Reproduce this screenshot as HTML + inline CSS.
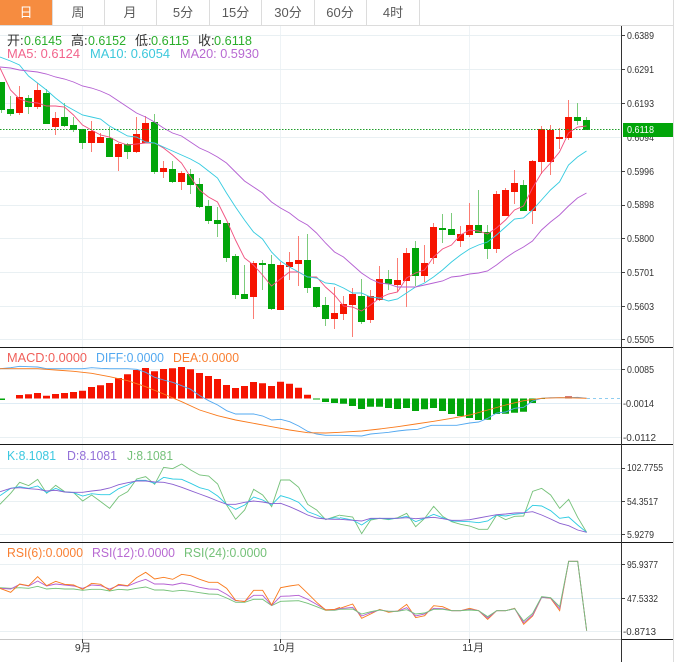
<!DOCTYPE html>
<html><head><meta charset="utf-8"><style>
html,body{margin:0;padding:0;background:#fff}
svg{display:block;font-family:"Liberation Sans","Noto Sans CJK SC",sans-serif}
.a{font-size:10.5px;fill:#333}
.t{font-size:13px;fill:#5a5a5a;text-anchor:middle}
.h{font-size:13px}
.l{fill:none;stroke-width:.9;vector-effect:non-scaling-stroke}
</style></head><body>
<svg width="678" height="662" viewBox="0 0 678 662" xmlns="http://www.w3.org/2000/svg">
<rect width="678" height="662" fill="#fff"/>
<!-- tabs -->
<rect x="0" y="0" width="52" height="25" fill="#f68c40"/>
<path d="M52.5 0V25M104.5 0V25M156.5 0V25M209.5 0V25M261.5 0V25M314.5 0V25M366.5 0V25M419.5 0V25" stroke="#dcdcdc"/>
<path d="M0 25.5H674" stroke="#dcdcdc"/>
<text class="t" x="26" y="17" style="fill:#fff">日</text>
<text class="t" x="78" y="17">周</text>
<text class="t" x="130" y="17">月</text>
<text class="t" x="183" y="17">5分</text>
<text class="t" x="235.500" y="17">15分</text>
<text class="t" x="288" y="17">30分</text>
<text class="t" x="340" y="17">60分</text>
<text class="t" x="393" y="17">4时</text>
<!-- grid -->
<path d="M82.500 26V639M280.500 26V639M469.500 26V639" stroke="#eef3f6"/>
<path d="M0 35.500H622M0 69.500H622M0 103.500H622M0 137.500H622M0 171.500H622M0 205.500H622M0 238.500H622M0 272.500H622M0 306.500H622M0 339.500H622M0 468.500H622M0 501.500H622M0 534.500H622M0 369.500H622M0 437.500H622M0 564.500H622M0 631.500H622" stroke="#e9f0f3"/>
<path d="M0 403.500H622M0 598.500H622" stroke="#dfecf5"/>
<!-- wicks -->
<path fill="none" stroke="#7ccb7c" d="M1.500 82V113M10.500 96V116M28.500 95V114M46.500 89V124M64.500 103V127M73.500 117V132M82.500 129V149M109.500 127V157M127.500 143V159M154.500 114V174M172.500 161V183M190.500 169V194M199.500 178V208M208.500 200V224M217.500 207V237M226.500 223V262M235.500 254V299M244.500 265V299M262.500 260V290M271.500 255V310M307.500 234V293M316.500 287V308M325.500 297V326M361.500 279V324M388.500 270V290M415.500 241V286M442.500 214V243M451.500 213V235M478.500 190V233M487.500 225V259M523.500 180V211M577.500 103V125M586.500 117V130"/>
<path fill="none" stroke="#fb7d74" d="M19.500 86V115M37.500 83V109M55.500 112V135M91.500 121V152M100.500 133V143M118.500 143V171M136.500 117V153M145.500 116V143M163.500 161V178M181.500 171V190M253.500 261V319M280.500 262V310M289.500 252V280M298.500 236V286M334.500 287V329M343.500 296V320M352.500 288V337M370.500 290V323M379.500 266V301M397.500 258V292M406.500 248V307M424.500 245V282M433.500 223V264M460.500 226V247M469.500 203V237M496.500 191V253M505.500 188V216M514.500 170V204M532.500 160V224M541.500 126V174M550.500 125V175M559.500 128V149M568.500 100V140"/>
<!-- bodies -->
<path fill="none" stroke="#02a50a" stroke-width="7" d="M1.500 82V110M10.500 109V114M28.500 98V107M46.500 93V124M64.500 117V126M73.500 125V130M82.500 129V143M109.500 138V157M127.500 144V152M154.500 122V172M172.500 169V182M190.500 174V185M199.500 184V207M208.500 206V221M217.500 220V224M226.500 223V258M235.500 256V295M244.500 294V299M262.500 263V265M271.500 264V309M307.500 260V288M316.500 287V307M325.500 305V319M361.500 296V322M388.500 279V284M415.500 248V276M442.500 228V230M451.500 229V235M478.500 225V233M487.500 232V249M523.500 185V211M577.500 117V121M586.500 120V130"/>
<path fill="none" stroke="#f61400" stroke-width="7" d="M19.500 97V113M37.500 90V107M55.500 118V127M91.500 131V143M100.500 137V143M118.500 144V157M136.500 134V152M145.500 123V143M163.500 168V172M181.500 173V182M253.500 263V297M280.500 265V310M289.500 262V267M298.500 260V264M334.500 313V319M343.500 304V314M352.500 294V305M370.500 296V320M379.500 279V300M397.500 280V285M406.500 253V281M424.500 263V276M433.500 227V258M460.500 234V241M469.500 225V235M496.500 194V249M505.500 190V216M514.500 183V192M532.500 161V211M541.500 129V162M550.500 130V162M559.500 137V139M568.500 117V138"/>
<!-- MA lines -->
<polyline class="l" stroke="#f0507f" points="0,68 10.500,90 19.500,99 28.500,102 37.500,103 46.500,106 55.500,106 64.500,107 73.500,115 82.500,125 91.500,130 100.500,135 109.500,137 118.500,142 127.500,145 136.500,144 145.500,143 154.500,143 163.500,148 172.500,155 181.500,163 190.500,177 199.500,190 208.500,197 217.500,202 226.500,220 235.500,240 244.500,258 253.500,265 262.500,275 271.500,286 280.500,279 289.500,272 298.500,272 307.500,277 316.500,277 325.500,287 334.500,295 343.500,306 352.500,307 361.500,311 370.500,305 379.500,298 388.500,294 397.500,292 406.500,278 415.500,273 424.500,270 433.500,257 442.500,249 451.500,245 460.500,235 469.500,230 478.500,231 487.500,234 496.500,228 505.500,220 514.500,210 523.500,206 532.500,188 541.500,173 550.500,163 559.500,152 568.500,133 577.500,127 586.500,126"/>
<polyline class="l" stroke="#35cbe0" points="0,57 10.500,61 19.500,65 28.500,76 37.500,83 46.500,90 55.500,98 64.500,105 73.500,110 82.500,115 91.500,117 100.500,119 109.500,126 118.500,131 127.500,136 136.500,137 145.500,142 154.500,143 163.500,147 172.500,151 181.500,155 190.500,159 199.500,164 208.500,171 217.500,178 226.500,193 235.500,207 244.500,220 253.500,232 262.500,239 271.500,252 280.500,261 289.500,267 298.500,272 307.500,277 316.500,278 325.500,283 334.500,284 343.500,288 352.500,293 361.500,293 370.500,297 379.500,298 388.500,301 397.500,299 406.500,293 415.500,287 424.500,283 433.500,277 442.500,270 451.500,262 460.500,255 469.500,249 478.500,245 487.500,242 496.500,235 505.500,227 514.500,219 523.500,218 532.500,210 541.500,200 550.500,190 559.500,182 568.500,165 577.500,157 586.500,151"/>
<polyline class="l" stroke="#b45fd2" points="0,67 10.500,68 19.500,70 28.500,71 37.500,72 46.500,74 55.500,77 64.500,79 73.500,82 82.500,86 91.500,88 100.500,91 109.500,95 118.500,101 127.500,107 136.500,113 145.500,117 154.500,122 163.500,128 172.500,133 181.500,136 190.500,142 199.500,148 208.500,152 217.500,157 226.500,163 235.500,172 244.500,181 253.500,187 262.500,193 271.500,202 280.500,208 289.500,213 298.500,220 307.500,225 316.500,233 325.500,243 334.500,252 343.500,257 352.500,265 361.500,273 370.500,279 379.500,283 388.500,284 397.500,287 406.500,287 415.500,287 424.500,285 433.500,283 442.500,281 451.500,277 460.500,276 469.500,274 478.500,273 487.500,271 496.500,265 505.500,258 514.500,252 523.500,247 532.500,241 541.500,230 550.500,222 559.500,215 568.500,206 577.500,198 586.500,193"/>
<path d="M0 129.500H622" stroke="#1f9e2a" stroke-dasharray="1.500 1.500"/>
<!-- main header -->
<text class="h" x="7" y="45" fill="#333">开:</text><text class="h" x="24" y="45" fill="#2bae2b" textLength="38" lengthAdjust="spacingAndGlyphs">0.6145</text>
<text class="h" x="71" y="45" fill="#333">高:</text><text class="h" x="88" y="45" fill="#2bae2b" textLength="38" lengthAdjust="spacingAndGlyphs">0.6152</text>
<text class="h" x="135" y="45" fill="#333">低:</text><text class="h" x="151" y="45" fill="#2bae2b" textLength="38" lengthAdjust="spacingAndGlyphs">0.6115</text>
<text class="h" x="198" y="45" fill="#333">收:</text><text class="h" x="214" y="45" fill="#2bae2b" textLength="38" lengthAdjust="spacingAndGlyphs">0.6118</text>
<text class="h" x="7" y="58" fill="#f2648c" textLength="73" lengthAdjust="spacingAndGlyphs">MA5: 0.6124</text>
<text class="h" x="90" y="58" fill="#3cc8dc" textLength="80" lengthAdjust="spacingAndGlyphs">MA10: 0.6054</text>
<text class="h" x="180" y="58" fill="#b86ad2" textLength="79" lengthAdjust="spacingAndGlyphs">MA20: 0.5930</text>
<!-- MACD -->
<path fill="none" stroke="#f61400" stroke-width="7" d="M19.500 395V398.500M28.500 394.300V398.500M37.500 393V398.500M46.500 395.700V398.500M55.500 394V398.500M64.500 393V398.500M73.500 392V398.500M82.500 390.700V398.500M91.500 387V398.500M100.500 385.300V398.500M109.500 383V398.500M118.500 378V398.500M127.500 374.300V398.500M136.500 370V398.500M145.500 368V398.500M154.500 371.300V398.500M163.500 369V398.500M172.500 368.300V398.500M181.500 367V398.500M190.500 369.300V398.500M199.500 373V398.500M208.500 376V398.500M217.500 379V398.500M226.500 385V398.500M235.500 388V398.500M244.500 386V398.500M253.500 382V398.500M262.500 383.300V398.500M271.500 386V398.500M280.500 381.700V398.500M289.500 383.700V398.500M298.500 387.700V398.500M307.500 394.700V398.500"/>
<path fill="none" stroke="#c8443c" stroke-width="7" d="M568.500 396.300V398.500"/>
<path fill="none" stroke="#02a50a" stroke-width="7" d="M1.500 398.500V400M316.500 398.500V399.500M325.500 398.500V402M334.500 398.500V403M343.500 398.500V403.700M352.500 398.500V406M361.500 398.500V409M370.500 398.500V406.700M379.500 398.500V406.700M388.500 398.500V408M397.500 398.500V409M406.500 398.500V408M415.500 398.500V411M424.500 398.500V409.300M433.500 398.500V408M442.500 398.500V411M451.500 398.500V414M460.500 398.500V416M469.500 398.500V418M478.500 398.500V420M487.500 398.500V419.700M496.500 398.500V414M505.500 398.500V413.700M514.500 398.500V412.700M523.500 398.500V411.700M532.500 398.500V403M541.500 398.500V399"/>
<path d="M587 398.500H620" stroke="#8fcdf0" stroke-dasharray="3 3"/>
<g transform="translate(0,345) scale(.33333)">
<polyline class="l" stroke="#52a8f0" points="0,71 32,68 59,64 86,65 113,66 140,71 167,71 194,71 221,71 248,71 275,68 302,70 329,71 356,71 383,71 410,73 437,82 464,97 491,105 518,112 545,122 572,133 599,152 626,167 653,180 680,197 707,207 734,207 761,207 788,213 815,225 842,223 869,230 896,243 923,259 950,267 977,271 1020,271"/>
<polyline class="l" stroke="#f97a1c" points="0,71 59,71 113,71 167,75 221,79 275,85 329,95 383,107 437,125 491,147 545,170 599,195 653,212 707,225 761,235 815,245 869,255 923,263 977,264 1020,262"/>
</g>
<g transform="translate(340,345) scale(.33333)">
<polyline class="l" stroke="#52a8f0" points="0,271 65,273 92,267 146,262 173,258 200,255 233,253 275,241 308,241 350,241 389,234 416,231 443,220 470,204 497,201 524,190 551,187 578,168 605,160 632,158 659,158 686,158 713,157 740,160"/>
<polyline class="l" stroke="#f97a1c" points="0,262 65,258 119,252 173,245 227,237 281,229 335,220 389,210 443,195 497,180 551,167 605,160 659,158 713,159 740,160"/>
</g>
<text class="h" x="7" y="362" fill="#f0605a" textLength="80" lengthAdjust="spacingAndGlyphs">MACD:0.0000</text>
<text class="h" x="96" y="362" fill="#52a8f0" textLength="68" lengthAdjust="spacingAndGlyphs">DIFF:0.0000</text>
<text class="h" x="173" y="362" fill="#f98033" textLength="66" lengthAdjust="spacingAndGlyphs">DEA:0.0000</text>
<!-- KDJ -->
<g transform="translate(0,445) scale(.33333)">
<polyline class="l" stroke="#74c178" points="0,178 32,145 59,112 86,122 113,103 140,145 167,121 194,140 221,143 248,168 275,150 302,170 329,190 356,155 383,140 410,102 437,95 464,118 491,67 518,71 545,57 572,75 599,90 626,93 653,117 680,180 707,223 734,195 761,133 788,150 815,185 842,105 869,105 896,127 923,178 950,195 977,224 1004,215 1020,210"/>
<polyline class="l" stroke="#2ccbe2" points="0,152 32,130 59,125 86,130 113,123 140,143 167,130 194,141 221,143 248,153 275,146 302,149 329,149 356,131 383,120 410,106 437,106 464,115 491,97 518,102 545,103 572,115 599,128 626,135 653,153 680,178 707,193 734,180 761,156 788,165 815,180 842,152 869,160 896,172 923,200 950,210 977,223 1004,218 1020,220"/>
<polyline class="l" stroke="#8a5fd0" points="0,140 32,130 59,128 86,131 113,133 140,138 167,136 194,141 221,142 248,142 275,138 302,135 329,129 356,119 383,113 410,108 437,108 464,111 491,112 518,118 545,127 572,137 599,147 626,157 653,168 680,178 707,178 734,172 761,168 788,171 815,176 842,175 869,185 896,197 923,210 950,219 977,222 1004,223 1020,223"/>
</g>
<g transform="translate(340,445) scale(.33333)">
<polyline class="l" stroke="#74c178" points="0,211 38,216 65,266 92,225 119,220 146,224 173,218 200,205 227,245 254,220 281,184 308,214 335,230 362,238 389,243 416,253 443,253 470,210 497,224 524,214 551,213 578,139 605,130 632,150 659,190 686,163 713,217 740,262"/>
<polyline class="l" stroke="#2ccbe2" points="0,218 38,225 65,240 92,222 119,220 146,222 173,220 200,214 227,230 254,220 281,208 308,218 335,228 362,229 389,230 416,233 443,228 470,210 497,213 524,208 551,205 578,181 605,183 632,197 659,220 686,216 713,240 740,262"/>
<polyline class="l" stroke="#8a5fd0" points="0,223 38,226 65,228 92,220 119,220 146,220 173,220 200,218 227,221 254,219 281,217 308,221 335,226 362,226 389,224 416,219 443,214 470,209 497,207 524,204 551,203 578,200 605,210 632,222 659,235 686,242 713,255 740,262"/>
</g>
<text class="h" x="7" y="460" fill="#3cc8e0" textLength="49" lengthAdjust="spacingAndGlyphs">K:8.1081</text>
<text class="h" x="67" y="460" fill="#9370d8" textLength="50" lengthAdjust="spacingAndGlyphs">D:8.1081</text>
<text class="h" x="127" y="460" fill="#74c178" textLength="46" lengthAdjust="spacingAndGlyphs">J:8.1081</text>
<!-- RSI -->
<g transform="translate(0,540) scale(.33333)">
<polyline class="l" stroke="#74c178" points="0,143 32,145 59,143 86,145 113,139 140,147 167,145 194,147 221,147 248,151 275,148 302,148 329,153 356,148 383,150 410,145 437,141 464,150 491,150 518,154 545,151 572,154 599,158 626,162 653,163 680,174 707,187 734,187 761,178 788,178 815,197 842,184 869,183 896,182 923,190 950,200 977,211 1004,211 1020,208"/>
<polyline class="l" stroke="#b45fd2" points="0,145 32,147 59,133 86,138 113,123 140,138 167,132 194,135 221,138 248,145 275,135 302,137 329,147 356,136 383,138 410,127 437,118 464,132 491,132 518,135 545,129 572,134 599,142 626,147 653,148 680,163 707,182 734,184 761,166 788,166 815,196 842,169 869,168 896,166 923,178 950,193 977,209 1004,209 1020,205"/>
<polyline class="l" stroke="#f97a1c" points="0,145 32,157 59,132 86,137 113,110 140,137 167,124 194,133 221,135 248,148 275,130 302,133 329,151 356,133 383,137 410,113 437,97 464,117 491,112 518,118 545,103 572,107 599,118 626,127 653,127 680,145 707,181 734,185 761,151 788,151 815,195 842,143 869,138 896,134 923,160 950,187 977,210 1004,208 1020,202"/>
</g>
<g transform="translate(340,540) scale(.33333)">
<polyline class="l" stroke="#f97a1c" points="0,205 38,192 65,235 92,222 119,208 146,217 173,213 200,193 227,233 254,227 281,197 308,200 335,212 362,212 389,205 416,212 443,238 470,212 497,212 524,205 551,253 578,228 605,172 632,175 659,212 686,64 713,64 740,272"/>
<polyline class="l" stroke="#b45fd2" points="0,206 38,202 65,228 92,218 119,210 146,214 173,214 200,203 227,228 254,222 281,205 308,206 335,212 362,212 389,208 416,212 443,234 470,212 497,212 524,206 551,248 578,225 605,172 632,174 659,206 686,64 713,64 740,272"/>
<polyline class="l" stroke="#74c178" points="0,208 38,207 65,222 92,215 119,210 146,214 173,214 200,209 227,222 254,219 281,208 308,208 335,212 362,212 389,210 416,212 443,230 470,212 497,212 524,206 551,243 578,220 605,170 632,173 659,200 686,64 713,64 740,272"/>
</g>
<text class="h" x="7" y="557" fill="#f98033" textLength="76" lengthAdjust="spacingAndGlyphs">RSI(6):0.0000</text>
<text class="h" x="92" y="557" fill="#b86ad2" textLength="83" lengthAdjust="spacingAndGlyphs">RSI(12):0.0000</text>
<text class="h" x="184" y="557" fill="#74c178" textLength="83" lengthAdjust="spacingAndGlyphs">RSI(24):0.0000</text>
<!-- frame -->
<path d="M0 347.500H673M0 444.500H673M0 542.500H673" stroke="#1a1a1a"/>
<path d="M0 639.500H622" stroke="#c8c8c8"/>
<path d="M622 639.500H673" stroke="#1a1a1a"/>
<path d="M621.500 26V662" stroke="#333"/>
<path d="M673.500 0V662" stroke="#dcdcdc"/>
<path d="M622 35.500h3M622 69.500h3M622 103.500h3M622 171.500h3M622 205.500h3M622 238.500h3M622 272.500h3M622 306.500h3M622 339.500h3M622 369.500h3M622 468.500h3M622 501.500h3M622 534.500h3M622 564.500h3M622 598.500h3M82.500 639v4M280.500 639v4M469.500 639v4" stroke="#444"/>
<!-- axis labels -->
<text class="a" x="627" y="39" textLength="27" lengthAdjust="spacingAndGlyphs">0.6389</text>
<text class="a" x="627" y="73" textLength="27" lengthAdjust="spacingAndGlyphs">0.6291</text>
<text class="a" x="627" y="107" textLength="27" lengthAdjust="spacingAndGlyphs">0.6193</text>
<text class="a" x="627" y="141" textLength="27" lengthAdjust="spacingAndGlyphs">0.6094</text>
<text class="a" x="627" y="175" textLength="27" lengthAdjust="spacingAndGlyphs">0.5996</text>
<text class="a" x="627" y="208" textLength="27" lengthAdjust="spacingAndGlyphs">0.5898</text>
<text class="a" x="627" y="242" textLength="27" lengthAdjust="spacingAndGlyphs">0.5800</text>
<text class="a" x="627" y="276" textLength="27" lengthAdjust="spacingAndGlyphs">0.5701</text>
<text class="a" x="627" y="310" textLength="27" lengthAdjust="spacingAndGlyphs">0.5603</text>
<text class="a" x="627" y="343" textLength="27" lengthAdjust="spacingAndGlyphs">0.5505</text>
<rect x="623" y="123" width="50" height="14" fill="#02a50a"/>
<text class="a" x="627" y="133" style="fill:#fff" textLength="27" lengthAdjust="spacingAndGlyphs">0.6118</text>
<text class="a" x="627" y="373" textLength="27" lengthAdjust="spacingAndGlyphs">0.0085</text>
<text class="a" x="623" y="407" textLength="31" lengthAdjust="spacingAndGlyphs">-0.0014</text>
<text class="a" x="623" y="441" textLength="33" lengthAdjust="spacingAndGlyphs">-0.0112</text>
<text class="a" x="627" y="471" textLength="36" lengthAdjust="spacingAndGlyphs">102.7755</text>
<text class="a" x="627" y="505" textLength="31" lengthAdjust="spacingAndGlyphs">54.3517</text>
<text class="a" x="627" y="538" textLength="27" lengthAdjust="spacingAndGlyphs">5.9279</text>
<text class="a" x="627" y="568" textLength="31" lengthAdjust="spacingAndGlyphs">95.9377</text>
<text class="a" x="627" y="602" textLength="31" lengthAdjust="spacingAndGlyphs">47.5332</text>
<text class="a" x="623" y="635" textLength="33" lengthAdjust="spacingAndGlyphs">-0.8713</text>
<text class="a" x="83" y="651" text-anchor="middle">9月</text>
<text class="a" x="284" y="651" text-anchor="middle">10月</text>
<text class="a" x="473" y="651" text-anchor="middle">11月</text>
</svg>
</body></html>
